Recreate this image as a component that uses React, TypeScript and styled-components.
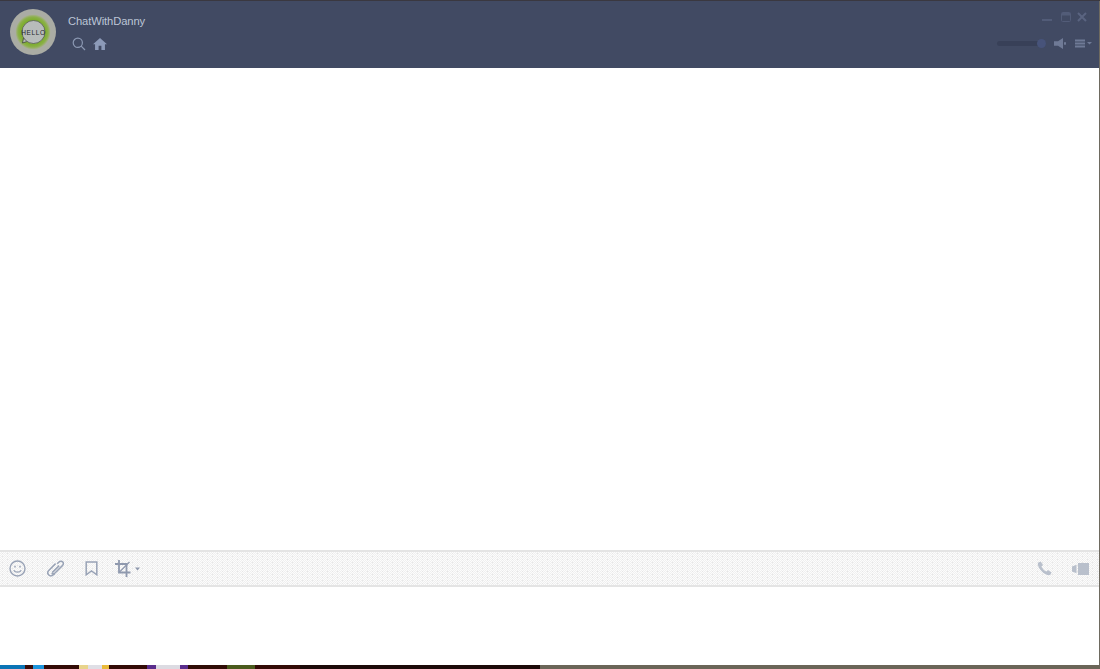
import React from 'react';
import styled, { createGlobalStyle } from 'styled-components';

const GlobalStyle = createGlobalStyle`
  html, body {
    margin: 0;
    padding: 0;
    height: 100%;
    overflow: hidden;
    background: #6b6558;
  }
  #root {
    height: 100%;
  }
`;

const Desktop = styled.div`
  display: flex;
  flex-direction: column;
  width: 1100px;
  height: 669px;
  font-family: 'Liberation Sans', Arial, sans-serif;
`;

const TopEdge = styled.div`
  height: 1px;
  flex: none;
  background: #3a3840;
`;

const WindowRow = styled.div`
  display: flex;
  flex: 1;
  min-height: 0;
`;

const Window = styled.div`
  display: flex;
  flex-direction: column;
  flex: 1;
  background: #fff;
`;

const RightEdge = styled.div`
  width: 1px;
  flex: none;
  background: #6e6a60;
`;

const Taskbar = styled.div`
  display: flex;
  height: 4px;
  flex: none;
`;

const TaskSegment = styled.div<{ $w?: number; $c: string }>`
  background: ${(p) => p.$c};
  ${(p) => (p.$w ? `width: ${p.$w}px; flex: none;` : 'flex: 1;')}
`;

const Header = styled.header`
  display: flex;
  justify-content: space-between;
  height: 67px;
  flex: none;
  background: #414a63;
`;

const Profile = styled.div`
  display: flex;
  align-items: flex-start;
  gap: 12px;
  padding: 8px 0 0 10px;
`;

const ProfileInfo = styled.div`
  display: flex;
  flex-direction: column;
  padding-top: 5px;
`;

const Name = styled.div`
  font-size: 11.2px;
  line-height: 14px;
  letter-spacing: -0.1px;
  color: #bcc5d6;
`;

const HeaderLinks = styled.div`
  display: flex;
  align-items: center;
  gap: 7px;
  margin-top: 9px;
  padding-left: 4px;
`;

const Controls = styled.div`
  display: flex;
  flex-direction: column;
  align-items: flex-end;
  padding: 9px 7px 0 0;
`;

const WindowButtons = styled.div`
  display: flex;
  align-items: center;
  gap: 6px;
  height: 14px;
  padding-right: 5px;
`;

const Volume = styled.div`
  display: flex;
  align-items: center;
  gap: 8px;
  margin-top: 14px;
`;

const Slider = styled.div`
  position: relative;
  width: 49px;
  height: 5px;
  border-radius: 3px;
  background: #384058;
`;

const SliderThumb = styled.div`
  position: absolute;
  right: 0;
  top: -2px;
  width: 9px;
  height: 9px;
  border-radius: 50%;
  background: #47537a;
`;

const Messages = styled.main`
  flex: 1;
  min-height: 0;
  background: #fff;
`;

const Toolbar = styled.div`
  display: flex;
  align-items: center;
  justify-content: space-between;
  height: 33px;
  flex: none;
  padding: 0 10px 0 9px;
  border-top: 2px solid #e4e4e4;
  border-bottom: 2px solid #e4e4e4;
  background-color: #fafafa;
  background-image: radial-gradient(#e6e6e6 0.6px, transparent 0.8px),
    repeating-conic-gradient(#efefef 0 25%, #fcfcfc 0 50%);
  background-size: 5px 3px, 2px 2px;
`;

const ToolGroup = styled.div`
  display: flex;
  align-items: center;
`;

const ToolSlot = styled.div<{ $w: number }>`
  display: flex;
  align-items: center;
  width: ${(p) => p.$w}px;
`;

const CallGroup = styled.div`
  display: flex;
  align-items: center;
  gap: 20px;
`;

const Composer = styled.div`
  height: 78px;
  flex: none;
  background: #fff;
`;

const Avatar = () => (
  <svg width="46" height="46" viewBox="0 0 46 46">
    <defs>
      <radialGradient id="avatarRing">
        <stop offset="0.72" stopColor="#7fae32" />
        <stop offset="0.86" stopColor="#8cb04a" />
        <stop offset="1" stopColor="#aab097" />
      </radialGradient>
    </defs>
    <circle cx="23" cy="23" r="23" fill="#aaaca4" />
    <circle cx="23" cy="23" r="17.5" fill="url(#avatarRing)" />
    <path d="M13.5 29 L12.5 34 L18.5 32 Z" fill="#b8bcbb" stroke="#3c4238" strokeWidth="0.8" />
    <circle cx="23.5" cy="23" r="11.5" fill="#b8bcbb" stroke="#4a4f48" strokeWidth="0.7" />
    <text x="23.5" y="25.5" textAnchor="middle" fontSize="6.5" letterSpacing="0.6" fill="#23262b" fontFamily="Liberation Sans, sans-serif">HELLO</text>
  </svg>
);

const SearchIcon = () => (
  <svg width="14" height="14" viewBox="0 0 14 14" fill="none" stroke="#8c99b3" strokeWidth="1.2">
    <circle cx="5.8" cy="5.8" r="4.6" />
    <path d="M9.2 9.2 L13 13" />
  </svg>
);

const HomeIcon = () => (
  <svg width="14" height="14" viewBox="0 0 15 14" fill="#8c9ab8">
    <path d="M7.5 0.5 L15 7.2 L12.8 7.2 L12.8 13.5 L9 13.5 L9 9 L6 9 L6 13.5 L2.2 13.5 L2.2 7.2 L0 7.2 Z" />
  </svg>
);

const MinimizeIcon = () => (
  <svg width="13" height="10" viewBox="0 0 13 10" fill="#525c78">
    <rect x="0" y="7" width="10" height="2" />
  </svg>
);

const MaximizeIcon = () => (
  <svg width="10" height="10" viewBox="0 0 10 10" fill="none" stroke="#525c78">
    <rect x="0.5" y="0.5" width="9" height="9" rx="1" />
    <rect x="1" y="1" width="8" height="2.5" fill="#525c78" stroke="none" />
  </svg>
);

const CloseIcon = () => (
  <svg width="10" height="10" viewBox="0 0 10 10" stroke="#5a6480" strokeWidth="2">
    <path d="M1 1 L9 9 M9 1 L1 9" />
  </svg>
);

const SpeakerIcon = () => (
  <svg width="12" height="11" viewBox="0 0 12 11" fill="#6f7a96">
    <path d="M0 3.2 H4 L9 0 V11 L4 7.8 H0 Z" />
    <rect x="10" y="4.2" width="2" height="2.5" />
  </svg>
);

const MenuIcon = () => (
  <svg width="18" height="9" viewBox="0 0 18 9" fill="#6f7a96">
    <rect x="1" y="0.5" width="10" height="2" />
    <rect x="1" y="3.5" width="10" height="2" />
    <rect x="1" y="6.5" width="10" height="2" />
    <path d="M13 3 H18 L15.5 5.5 Z" />
  </svg>
);

const SmileIcon = () => (
  <svg width="17" height="17" viewBox="0 0 17 17" fill="none" stroke="#99a3b6" strokeWidth="1.4">
    <circle cx="8.5" cy="8.5" r="7.5" />
    <path d="M4.8 10.2 C6 12.8 11 12.8 12.2 10.2" />
    <path d="M6 5.8 V7.6 M11 5.8 V7.6" strokeWidth="1.5" />
  </svg>
);

const ClipIcon = () => (
  <svg width="17" height="17" viewBox="0 0 17 17" fill="none" stroke="#99a3b6" strokeWidth="1.5">
    <path d="M10.2 3.8 L12 2 C13.2 0.8 15 1 15.8 2 C16.6 3 16.4 4.6 15.4 5.6 L8 13 C6.8 14.2 5.4 14 4.6 13.2" />
    <path d="M12.2 5.6 L5.2 12.6 M8.6 3.6 L2 10.2 C0.4 11.8 0.6 13.8 1.8 15 C3 16.2 5 16.2 6.4 14.8 L7.6 13.6" />
  </svg>
);

const BookmarkIcon = () => (
  <svg width="13" height="15" viewBox="0 0 13 15" fill="none" stroke="#99a3b6" strokeWidth="1.5">
    <path d="M1.2 1 H11.8 V13.8 L6.5 10 L1.2 13.8 Z" />
  </svg>
);

const CropIcon = () => (
  <svg width="26" height="17" viewBox="0 0 26 17" fill="none" stroke="#8f99ae" strokeWidth="1.8">
    <path d="M4 0 V12.5 H15.5" />
    <path d="M0 4 H11.5 V17" />
    <path d="M4.5 12 L14.5 2" strokeWidth="1.3" />
    <path d="M20 7.5 H25 L22.5 10.5 Z" fill="#8f99ae" stroke="none" />
  </svg>
);

const PhoneIcon = () => (
  <svg width="15" height="15" viewBox="0 0 15 15" fill="#b9c0cc">
    <path d="M1 1.8 L3.6 0.4 L6 4 L4.4 5.6 C5.2 7.6 7.4 9.8 9.4 10.6 L11 9 L14.6 11.4 L13.2 14 C8.2 15.4 -0.4 6.8 1 1.8 Z" />
  </svg>
);

const VideoIcon = () => (
  <svg width="17" height="12" viewBox="0 0 17 12" fill="#b9c0cc">
    <rect x="6" y="0" width="11" height="12" />
    <path d="M0 3.6 L4.5 1.8 V10.2 L0 8.4 Z" />
  </svg>
);

const App = () => (
  <>
    <GlobalStyle />
    <Desktop>
      <TopEdge />
      <WindowRow>
        <Window>
          <Header>
            <Profile>
              <Avatar />
              <ProfileInfo>
                <Name>ChatWithDanny</Name>
                <HeaderLinks>
                  <SearchIcon />
                  <HomeIcon />
                </HeaderLinks>
              </ProfileInfo>
            </Profile>
            <Controls>
              <WindowButtons>
                <MinimizeIcon />
                <MaximizeIcon />
                <CloseIcon />
              </WindowButtons>
              <Volume>
                <Slider>
                  <SliderThumb />
                </Slider>
                <SpeakerIcon />
                <MenuIcon />
              </Volume>
            </Controls>
          </Header>
          <Messages />
          <Toolbar>
            <ToolGroup>
              <ToolSlot $w={38}>
                <SmileIcon />
              </ToolSlot>
              <ToolSlot $w={38}>
                <ClipIcon />
              </ToolSlot>
              <ToolSlot $w={30}>
                <BookmarkIcon />
              </ToolSlot>
              <ToolSlot $w={26}>
                <CropIcon />
              </ToolSlot>
            </ToolGroup>
            <CallGroup>
              <PhoneIcon />
              <VideoIcon />
            </CallGroup>
          </Toolbar>
          <Composer />
        </Window>
        <RightEdge />
      </WindowRow>
      <Taskbar>
        <TaskSegment $w={25} $c="#0b74b5" />
        <TaskSegment $w={8} $c="#3a0d08" />
        <TaskSegment $w={11} $c="#1c95dc" />
        <TaskSegment $w={35} $c="#330b06" />
        <TaskSegment $w={9} $c="#e8d48c" />
        <TaskSegment $w={14} $c="#dfdfe6" />
        <TaskSegment $w={7} $c="#e9bb3a" />
        <TaskSegment $w={38} $c="#330b06" />
        <TaskSegment $w={9} $c="#5a2d8c" />
        <TaskSegment $w={24} $c="#dcdbe2" />
        <TaskSegment $w={8} $c="#5a2d8c" />
        <TaskSegment $w={39} $c="#300c06" />
        <TaskSegment $w={28} $c="#4a5a1c" />
        <TaskSegment $w={45} $c="#330b06" />
        <TaskSegment $w={240} $c="#1c0a08" />
        <TaskSegment $c="#6b6558" />
      </Taskbar>
    </Desktop>
  </>
);

export default App;
